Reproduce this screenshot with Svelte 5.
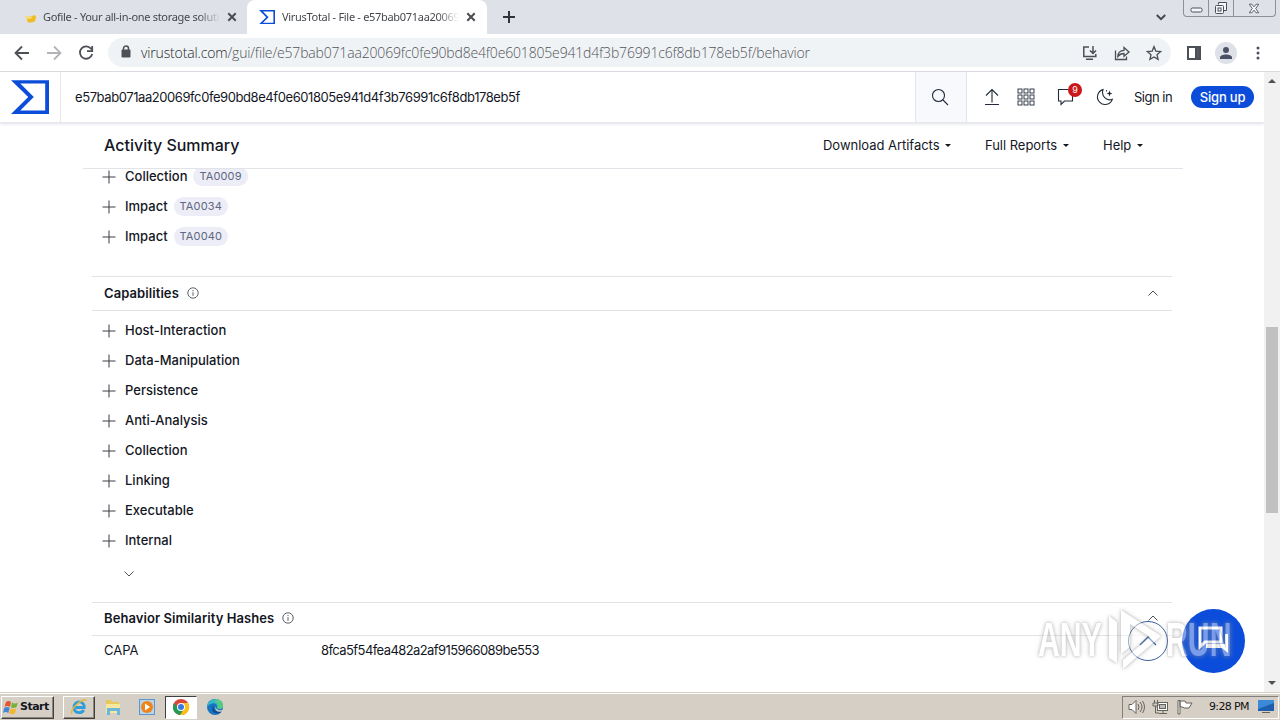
<script lang="ts">
  const hash = 'e57bab071aa20069fc0fe90bd8e4f0e601805e941d4f3b76991c6f8db178eb5f';

  const tactics = [
    { name: 'Collection', id: 'TA0009' },
    { name: 'Impact', id: 'TA0034' },
    { name: 'Impact', id: 'TA0040' }
  ];

  const capabilities = [
    'Host-Interaction',
    'Data-Manipulation',
    'Persistence',
    'Anti-Analysis',
    'Collection',
    'Linking',
    'Executable',
    'Internal'
  ];
</script>

{#snippet plus()}
  <svg class="plus" width="14" height="14" viewBox="0 0 14 14"><path d="M7 .5v13M.5 7h13" /></svg>
{/snippet}

{#snippet info()}
  <svg class="info" width="12" height="12" viewBox="0 0 12 12">
    <circle cx="6" cy="6" r="5.2" /><path d="M6 5.2v3.6M6 3v1.2" />
  </svg>
{/snippet}

{#snippet closeTab()}
  <svg class="close" width="10" height="10" viewBox="0 0 10 10"><path d="M1.3 1.3l7.4 7.4M8.7 1.3L1.3 8.7" /></svg>
{/snippet}

{#snippet sigma(size: number)}
  <svg class="sigma" width={size} height={size * 0.9} viewBox="0 0 100 89">
    <path fill-rule="evenodd" d="M45.3 44.5L0 89h100V0H0zM90 79.5H24.5L60 44.5 24.5 9H90z" />
  </svg>
{/snippet}

<div class="desktop">
  <div class="tabstrip">
    <div class="tab first">
      <svg class="favicon gofile" width="16" height="16" viewBox="0 0 16 16">
        <path d="M4 8l6-1 3-1 1 2-1 4.500-4 1H6z" fill="#f0bd20" /><path d="M2.500 7l7 .5 1 1.500-4 1-3-1z" fill="#f6dc86" />
      </svg>
      <span class="title">Gofile - Your all-in-one storage soluti</span>
      {@render closeTab()}
    </div>
    <div class="tab active">
      <span class="favicon">{@render sigma(16)}</span>
      <span class="title">VirusTotal - File - e57bab071aa20069</span>
      {@render closeTab()}
    </div>
    <svg class="newtab" width="12" height="12" viewBox="0 0 12 12"><path d="M6 0v12M0 6h12" /></svg>
    <svg class="tabmenu" width="10" height="7" viewBox="0 0 10 7"><path d="M.8 1l4.2 4.2L9.200 1" /></svg>
    <div class="winctl">
      <span class="min"><svg width="13" height="6" viewBox="0 0 13 6"><rect x="1" y="1" width="11" height="4" rx="1.500" /></svg></span>
      <span class="max">
        <svg width="14" height="14" viewBox="0 0 14 14"><path d="M4.500 3.500v-2h8v8h-3" /><rect x="1.500" y="4.500" width="8" height="8" rx="1" /><rect x="4" y="7" width="3" height="3" /></svg>
      </span>
      <span class="shut">
        <svg width="12" height="11" viewBox="0 0 14 12"><path d="M1.500 1h3l2.500 3 2.500-3h3L9 6l3.500 5h-3L7 8l-2.500 3h-3L5 6z" /></svg>
      </span>
    </div>
  </div>

  <div class="toolbar">
    <svg class="nav" width="16" height="16" viewBox="0 0 16 16"><path d="M15 8H2M8 1.500L1.500 8 8 14.500" /></svg>
    <svg class="nav off" width="16" height="16" viewBox="0 0 16 16"><path d="M1 8h13M8 1.500L14.500 8 8 14.500" /></svg>
    <svg class="nav" width="16" height="16" viewBox="0 0 16 16"><path d="M13.300 4A6.200 6.200 0 1 0 14.200 9M14.200 1v5.200H9" /></svg>
    <div class="omnibox">
      <svg class="lock" width="10" height="13" viewBox="0 0 10 13"><rect x="0.500" y="4.500" width="9" height="8" rx="1" /><path d="M2.500 5V3.500a2.500 2.500 0 0 1 5 0V5" /></svg>
      <span class="url"><span class="host">virustotal.com</span><span class="path">/gui/file/{hash}/behavior</span></span>
      <div class="actions">
        <svg width="16" height="16" viewBox="0 0 16 16"><path d="M7 2H1.800v9.500h12V9M4 14.200h7M11 1v7M8 5.500l3 3 3-3" /></svg>
        <svg class="thin" width="16" height="16" viewBox="0 0 16 16"><path d="M1.500 5.500v9h11v-3M3.800 11.500c.2-4 2.500-6 6.200-6.200V2.500l5 4.500-5 4.300V8.500c-2.800 0-4.600 1-6.200 3z" /></svg>
        <svg class="thin" width="16" height="16" viewBox="0 0 16 16"><path d="M8 1.600l1.800 4.500 4.900.4-3.700 3.200 1.100 4.700L8 11.900l-4.100 2.500L5 9.700 1.300 6.500l4.900-.4z" /></svg>
      </div>
    </div>
    <svg class="panel" width="14" height="14" viewBox="0 0 14 14"><rect x="1" y="1" width="12" height="12" /><path d="M9 1h4v12H9z" fill="#55585c" /></svg>
    <span class="avatar">
      <svg width="12" height="12" viewBox="0 0 12 12"><circle cx="6" cy="3" r="3" /><path d="M0 12v-1.500C0 8.500 3 7.500 6 7.500s6 1 6 3V12z" /></svg>
    </span>
    <svg class="dots" width="4" height="14" viewBox="0 0 4 14"><circle cx="2" cy="2" r="1.500" /><circle cx="2" cy="7" r="1.500" /><circle cx="2" cy="12" r="1.500" /></svg>
  </div>

  <div class="viewport">
    <div class="page">
      <header>
        <div class="brand">{@render sigma(38)}</div>
        <span class="query">{hash}</span>
        <div class="search">
          <svg width="18" height="18" viewBox="0 0 18 18"><circle cx="7.500" cy="7.500" r="6" /><path d="M12 12l5 5" /></svg>
        </div>
        <div class="tools">
          <svg width="16" height="18" viewBox="0 0 16 18"><path d="M8 14.500V1.500M2 7.500l6-6 6 6M1 16.500h14" /></svg>
          <svg class="grid" width="18" height="18" viewBox="0 0 18 18">
            {#each [1, 7, 13] as y}{#each [1, 7, 13] as x}<rect {x} {y} width="4" height="4" />{/each}{/each}
          </svg>
          <span class="comments">
            <svg width="18" height="18" viewBox="0 0 18 18"><path d="M15.500 8v5H7.500l-3.500 3.500V13H1.500V1.500H11" /></svg>
            <span class="count">9</span>
          </span>
          <svg class="moon" width="18" height="18" viewBox="0 0 18 18"><path d="M7 1.600A7.600 7.600 0 1 0 16.300 11.300C10.500 13.500 5 8 7 1.600z" /><path d="M13.500 2.500l.8 2.200 2.200.8-2.200.8-.8 2.200-.8-2.200-2.200-.8 2.200-.8z" fill="#222b3a" stroke="none" /><path d="M10.500 2.200v1.300" /></svg>
          <span class="signin">Sign in</span>
          <span class="signup">Sign up</span>
        </div>
      </header>

      <div class="summary">
        <h1>Activity Summary</h1>
        <span class="menu artifacts">Download Artifacts<i></i></span>
        <span class="menu reports">Full Reports<i></i></span>
        <span class="menu help">Help<i></i></span>
      </div>

      <main>
        <ul class="tactics">
          {#each tactics as tactic}
            <li>{@render plus()}<span>{tactic.name}</span><b>{tactic.id}</b></li>
          {/each}
        </ul>

        <h2>Capabilities {@render info()}<svg class="chevron up" width="10" height="6" viewBox="0 0 10 6"><path d="M.5 5.500L5 1l4.500 4.500" /></svg></h2>
        <ul class="capabilities">
          {#each capabilities as capability}
            <li>{@render plus()}<span>{capability}</span></li>
          {/each}
        </ul>
        <div class="more"><svg class="chevron" width="10" height="6" viewBox="0 0 10 6"><path d="M.5.500L5 5 9.500.500" /></svg></div>

        <h2 class="hashes">Behavior Similarity Hashes {@render info()}<svg class="chevron up" width="10" height="6" viewBox="0 0 10 6"><path d="M.5 5.500L5 1l4.500 4.500" /></svg></h2>
        <div class="row"><span class="key">CAPA</span><span class="value">8fca5f54fea482a2af915966089be553</span></div>
      </main>

      <div class="totop"><svg width="18" height="10" viewBox="0 0 18 10"><path d="M1 9l8-8 8 8" /></svg></div>
      <div class="chat">
        <svg width="32" height="32" viewBox="0 0 32 32"><path d="M2 3h21v14H7l-5 5z" /><path d="M27 9h3v19l-6-5H8v-4h19z" fill="#fff" stroke="none" /></svg>
      </div>
      <div class="watermark">
        <span>ANY</span>
        <svg width="62" height="66" viewBox="0 0 62 66">
          <path d="M5 9v42l8 5V15zM17 3l40 26-38 33v-9l27-23-20-13v23l-9 7z" />
        </svg>
        <span>RUN</span>
      </div>
    </div>
    <div class="scrollbar"><i class="top"></i><div class="thumb"></div><i class="bottom"></i></div>
  </div>

  <div class="taskbar">
    <div class="start">
      <svg width="16" height="15" viewBox="0 0 16 15">
        <path d="M3 2q3-2 5 0L7 7Q4 5 1.500 7z" fill="#e4572b" /><path d="M9 2.500q3 2 6 0L13.500 7q-3 2-5.500.2z" fill="#78b13a" />
        <path d="M1.200 8q3-2 5.500 0L5.300 13q-2.500-2-5.300 0z" fill="#4486cf" /><path d="M7.700 8.200q2.800 2 5.600 0L12 13.200q-3 2-5.700 0z" fill="#f3b72d" />
      </svg>
      Start
    </div>
    <div class="task ie">
      <svg width="18" height="18" viewBox="0 0 18 18"><path class="e" d="M4 9.500h10.200C14.500 2 4 2 4 9.500c0 6 7.500 6.500 9.700 2.500" /><path class="ring" d="M2 16C-1 12 13-1 16.500 2.500" /></svg>
    </div>
    <div class="task">
      <svg width="18" height="18" viewBox="0 0 18 18"><path d="M2 4V2h5l1 2h7v11H2z" fill="#e9c75b" /><path d="M2 6h14v9H2z" fill="#f7e79f" /><path d="M3 10h13v7h-3v-4H6v4H3z" fill="#6bb8da" /></svg>
    </div>
    <div class="task">
      <svg width="18" height="18" viewBox="0 0 18 18"><path d="M1 1h16v16H1z" fill="#5997cc" /><path d="M2 2h14v14H2z" fill="#b9d3e9" /><circle cx="9" cy="9" r="6" fill="#ef841b" /><path d="M7 5.500l5 3.500-5 3.500z" fill="#fff" /></svg>
    </div>
    <div class="task pressed">
      <svg width="18" height="18" viewBox="0 0 18 18"><circle cx="9" cy="9" r="8" fill="#dc4437" /><path d="M2 5a8 8 0 0 0 6 12l4-6-6-1z" fill="#219b55" /><path d="M9 5h7a8 8 0 0 1-8 12l4-6z" fill="#fbc116" /><circle cx="9" cy="9" r="4" fill="#fff" /><circle cx="9" cy="9" r="3" fill="#3779e5" /></svg>
    </div>
    <div class="task">
      <svg width="18" height="18" viewBox="0 0 18 18"><circle cx="9" cy="9" r="8" fill="#1674c0" /><path d="M1 9C2-1 16-1 17 7c0 4-4 5-6 3 1-6-6-6-10-1z" fill="#35b9c8" /><path d="M10 1q7 1 7 7c0 3-3 4-6 2 2-2 1-5-2-6z" fill="#56c982" /><path d="M8 7c-2 4 2 8 8 6l-2 2c-7 2-10-4-6-8z" fill="#134b91" /><path d="M10 8c-1 3 2 5 7 4l1-1v3l-3-.5c-4 1-7-2-5-5.500z" fill="#d6cfc6" /></svg>
    </div>
    <div class="tray">
      <svg width="17" height="16" viewBox="0 0 17 16"><path d="M1 5.500h3l4-4v13l-4-4H1z" fill="#fff" /><path d="M10 5q2 3 0 6M12 3q4 5 0 10M14.500 2q4 6 0 12" /></svg>
      <svg width="17" height="16" viewBox="0 0 17 16"><rect x="5.500" y="3.500" width="10" height="8" fill="#fff" /><rect x="7.500" y="5.500" width="6" height="4" fill="#bbb" /><path d="M7 14.500h8M11 11v3M2.500 1v3M5.500 1v3M1 4h5v3H1zM3.500 7v7H7" /></svg>
      <svg width="17" height="16" viewBox="0 0 17 16"><path d="M2 15V1.500h2V15zM4 2h5l1 2h6l-3 5H8L7 8H4z" fill="#fff" /></svg>
      <time>9:28 PM</time>
      <svg class="display" width="16" height="14" viewBox="0 0 16 14"><rect x="0" y="0" width="16" height="11" fill="#1d5eae" stroke="none" /><path d="M0 0h16v3L0 9z" fill="#3b8ad8" stroke="none" /><path d="M4 12.500h8" /></svg>
    </div>
  </div>
</div>

<style>
  :global(body) {
    margin: 0;
    overflow: hidden;
  }

  .desktop {
    display: flex;
    flex-direction: column;
    width: 1280px;
    height: 720px;
    background: #fff;
    color: #14171f;
    font: 13px/16px Inter, sans-serif;
  }

  svg {
    display: block;
    flex: none;
    fill: none;
    stroke: #4b5058;
  }

  .sigma {
    fill: #0b4dda;
    stroke: none;
  }

  /* Browser window */
  .tabstrip {
    display: flex;
    align-items: center;
    height: 34px;
    background: #dee1e7;
    font: 11px/16px "Noto Sans", sans-serif;
  }

  .tab {
    display: flex;
    align-items: center;
    box-sizing: border-box;
    height: 34px;
    color: #45484d;
  }

  .first {
    width: 247px;
    padding-left: 22px;
    border-radius: 0 0 8px 0;
  }

  .active {
    width: 240px;
    padding-left: 12px;
    border-radius: 8px 8px 0 0;
    background: #fff;
  }

  .favicon {
    width: 16px;
    margin-right: 5px;
  }

  .gofile {
    stroke: none;
  }

  .title {
    width: 177px;
    overflow: hidden;
    white-space: nowrap;
    letter-spacing: -0.300px;
    mask-image: linear-gradient(90deg, #000 88%, transparent);
  }

  .active .favicon {
    margin-right: 7px;
  }

  .close {
    margin-left: 7px;
    stroke: #484b50;
    stroke-width: 2;
  }

  .newtab {
    margin-left: 16px;
    stroke: #303338;
    stroke-width: 2;
  }

  .tabmenu {
    margin-left: auto;
    stroke: #44484e;
    stroke-width: 2;
  }

  .winctl {
    display: flex;
    align-self: flex-start;
    box-sizing: border-box;
    width: 93px;
    height: 17px;
    margin: 0 4px 0 17px;
    border: 1px solid #8c9199;
    border-top: 0;
    border-radius: 0 0 4px 4px;
  }

  .winctl span {
    display: flex;
    justify-content: center;
    align-items: center;
  }

  .min {
    width: 24px;
    padding-top: 4px;
  }

  .max {
    width: 24px;
    border: solid #8c9199;
    border-width: 0 1px;
  }

  .shut {
    flex: 1;
    padding-right: 2px;
  }

  .winctl svg {
    fill: #f5f6f8;
  }

  .toolbar {
    display: flex;
    align-items: center;
    height: 37px;
    padding-left: 14px;
    border-bottom: 1px solid #d9dbdf;
  }

  .nav {
    margin-right: 16px;
    stroke: #4d5156;
    stroke-width: 1.800;
  }

  .off {
    stroke: #b2b4b8;
  }

  .omnibox {
    display: flex;
    align-items: center;
    box-sizing: border-box;
    width: 1063px;
    height: 29px;
    margin-left: -2px;
    padding: 0 9px 0 13px;
    border-radius: 15px;
    background: #f0f3f5;
  }

  .lock {
    margin: 0 10px 2px 0;
    stroke-width: 1.500;
  }

  .lock rect {
    fill: #4d5156;
    stroke: none;
  }

  .url {
    font: 300 14px/20px "Open Sans", sans-serif;
    letter-spacing: -0.170px;
    white-space: nowrap;
  }

  .host {
    color: #24272b;
    letter-spacing: -0.150px;
  }

  .path {
    color: #50545a;
  }

  .actions {
    display: flex;
    gap: 16px;
    margin-left: auto;
  }

  .actions svg {
    stroke-width: 1.500;
  }

  .actions .thin {
    stroke-width: 1.300;
  }

  .panel {
    margin-left: 16px;
    stroke-width: 2;
  }

  .avatar {
    display: grid;
    place-items: center;
    width: 22px;
    height: 22px;
    margin: 0 19px 0 14px;
    border-radius: 50%;
    background: #dee1e7;
  }

  .avatar svg,
  .dots {
    fill: #4b5268;
    stroke: none;
  }

  .viewport {
    display: flex;
    height: 620px;
  }

  .page {
    position: relative;
    width: 1264px;
    overflow: hidden;
  }

  /* Site header */
  header {
    display: flex;
    align-items: center;
    height: 50px;
    border-bottom: 1px solid #e5e7ec;
    box-shadow: 0 1px 3px #dfe1e6;
  }

  .brand {
    display: flex;
    align-items: center;
    box-sizing: border-box;
    width: 61px;
    height: 50px;
    padding-left: 11px;
    border-right: 1px solid #e5e7ee;
  }

  .query {
    flex: 1;
    padding-left: 14px;
    letter-spacing: -0.420px;
  }

  .search {
    display: grid;
    place-items: center;
    box-sizing: border-box;
    width: 52px;
    height: 50px;
    border: solid #e2e6ed;
    border-width: 0 1px;
    background: #f7f9fc;
  }

  .search svg,
  .tools svg {
    stroke: #222b3a;
    stroke-width: 1.100;
  }

  .search svg {
    margin-right: 2px;
  }

  .tools {
    display: flex;
    align-items: center;
    box-sizing: border-box;
    width: 297px;
    padding-left: 17px;
  }

  .tools .grid {
    margin-left: 17px;
    stroke-width: 0.900;
  }

  .comments {
    position: relative;
    margin-left: 22px;
  }

  .count {
    position: absolute;
    top: -5px;
    left: 11px;
    width: 14px;
    height: 14px;
    border-radius: 50%;
    background: #cb1717;
    color: #fff;
    font-size: 9px;
    line-height: 14px;
    text-align: center;
  }

  .moon {
    margin-left: 21px;
  }

  .signin {
    width: 39px;
    margin-left: 20px;
    letter-spacing: -0.500px;
    white-space: nowrap;
  }

  .signup {
    width: 63px;
    height: 22px;
    margin-left: 18px;
    border-radius: 11px;
    background: #0b4dda;
    color: #fff;
    font-weight: 500;
    line-height: 22px;
    text-align: center;
    letter-spacing: -0.200px;
  }

  /* Report */
  .summary {
    display: flex;
    align-items: center;
    box-sizing: border-box;
    height: 46px;
    margin: 0 81px 0 83px;
    padding: 0 0 1px 21px;
    border-bottom: 1px solid #e0e3e7;
  }

  h1 {
    width: 719px;
    margin: 0;
    font-size: 16px;
    font-weight: 500;
  }

  .menu {
    display: flex;
    justify-content: space-between;
    align-items: center;
    white-space: nowrap;
    letter-spacing: -0.030px;
  }

  .menu i {
    margin-top: 1px;
    border: 3px solid transparent;
    border-top-color: #14171f;
    border-bottom: 0;
  }

  .artifacts {
    width: 128px;
  }

  .reports {
    width: 84px;
    margin-left: 34px;
  }

  .help {
    width: 40px;
    margin-left: 34px;
  }

  main {
    margin: 0 92px;
  }

  ul {
    margin: 0;
    padding: 0 0 0 10px;
    list-style: none;
  }

  .tactics {
    height: 108px;
    margin-top: -8px;
    clip-path: inset(8px 0 0);
  }

  .capabilities {
    padding-top: 4px;
  }

  li {
    display: flex;
    align-items: center;
    height: 30px;
    font-weight: 500;
  }

  .plus {
    margin: 1px 9px 0 0;
    stroke: #383c45;
  }

  li b {
    margin-left: 6px;
    padding: 0 6px;
    border-radius: 10px;
    background: #ecedf6;
    color: #606780;
    font-size: 11px;
    font-weight: 400;
    line-height: 19px;
    letter-spacing: 0.130px;
  }

  h2 {
    display: flex;
    align-items: center;
    box-sizing: border-box;
    height: 35px;
    margin: 7px 0 0;
    padding: 0 14px 1px 12px;
    border: solid #e0e3e7;
    border-width: 1px 0;
    font-size: 13px;
    font-weight: 600;
    letter-spacing: 0.080px;
  }

  .info {
    margin-left: 8px;
    stroke-width: 0.900;
  }

  .up {
    margin-left: auto;
  }

  .more {
    box-sizing: border-box;
    height: 33px;
    padding: 16px 0 0 32px;
  }

  .hashes {
    height: 34px;
    margin-top: 14px;
    padding-bottom: 2px;
  }

  .row {
    display: flex;
    align-items: center;
    height: 28px;
    padding-left: 12px;
  }

  .key {
    width: 217px;
  }

  .value {
    letter-spacing: -0.580px;
  }

  /* Floating controls */
  .totop,
  .chat {
    position: absolute;
    display: grid;
    place-items: center;
    border-radius: 50%;
  }

  .totop {
    left: 1128px;
    top: 549px;
    width: 38px;
    height: 38px;
    border: 1px solid #385f9e;
    background: #ffffffb8;
  }

  .totop svg {
    stroke: #2558a5;
    stroke-width: 1.300;
  }

  .chat {
    left: 1182px;
    top: 537px;
    width: 63px;
    height: 64px;
    background: #0b4dda;
  }

  .chat svg {
    stroke: #fff;
    stroke-width: 3;
  }

  .watermark {
    position: absolute;
    left: 1038px;
    top: 535px;
    display: flex;
    align-items: center;
    width: 195px;
    opacity: 0.450;
    color: #fff;
    filter: drop-shadow(0 0 1.500px #777) drop-shadow(0 0 2px #aaa);
    font: 700 48px/66px "Liberation Sans", sans-serif;
  }

  .watermark span {
    width: 66px;
    transform: scaleX(0.63);
    transform-origin: left;
  }

  .watermark svg {
    fill: #fff;
    stroke: none;
  }

  .scrollbar {
    display: flex;
    flex-direction: column;
    align-items: center;
    width: 16px;
    background: #f1f1f1;
  }

  .scrollbar i {
    border: 4px solid transparent;
  }

  .scrollbar .top {
    margin-top: 7px;
    border-top: 0;
    border-bottom-color: #505050;
  }

  .scrollbar .bottom {
    margin: auto 0 7px;
    border-bottom: 0;
    border-top-color: #505050;
  }

  .thumb {
    width: 12px;
    height: 186px;
    margin-top: 244px;
    background: #c1c1c1;
  }

  /* Windows taskbar */
  .taskbar {
    display: flex;
    align-items: center;
    box-sizing: border-box;
    height: 28px;
    padding-top: 1px;
    border-top: 1px solid #d6cfc6;
    box-shadow: inset 0 1px #fff;
    background: #d6cfc6;
    font: 11px/14px "DejaVu Sans", sans-serif;
  }

  .start,
  .ie {
    border: 1px solid;
    border-color: #fff #404040 #404040 #fff;
    box-shadow: inset -1px -1px #8b8780;
  }

  .start {
    display: flex;
    align-items: center;
    gap: 1px;
    box-sizing: border-box;
    width: 53px;
    height: 23px;
    margin: 0 9px 0 1px;
    padding-left: 1px;
    font-weight: 700;
    letter-spacing: -0.500px;
  }

  .start svg,
  .task svg {
    stroke: none;
  }

  .task {
    display: grid;
    place-items: center;
    box-sizing: border-box;
    width: 32px;
    height: 23px;
    margin-right: 2px;
  }

  .task .e {
    stroke: #2f9fdb;
    stroke-width: 2.800;
  }

  .task .ring {
    stroke: #e9b935;
    stroke-width: 1.500;
  }

  .pressed {
    border: 1px solid;
    border-color: #404040 #fff #fff #404040;
    background: #fff;
  }

  .tray {
    display: flex;
    align-items: center;
    box-sizing: border-box;
    width: 157px;
    height: 23px;
    margin: 0 1px 0 auto;
    padding-left: 5px;
    border: 1px solid;
    border-color: #85817a #fff #fff #85817a;
  }

  .tray svg {
    margin-right: 7px;
    stroke: #66635d;
  }

  time {
    width: 43px;
    margin: 0 9px;
    color: #111;
    letter-spacing: -0.650px;
    white-space: nowrap;
  }
</style>
